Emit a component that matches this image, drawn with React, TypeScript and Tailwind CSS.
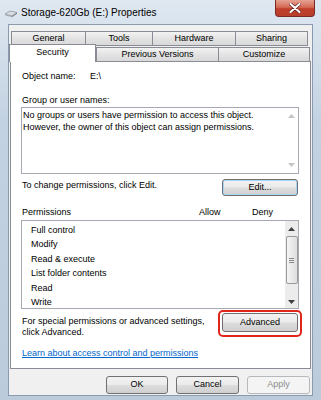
import { type ReactNode } from 'react';

const btn =
  'flex items-center justify-center rounded-[3px] border border-[#707070] bg-[linear-gradient(#f2f2f2_0%,#ebebeb_48%,#dddddd_52%,#cfcfcf_100%)] text-[9px] text-black';

function Tab({ label, width, selected }: { label: string; width: number; selected?: boolean }) {
  return (
    <div
      style={{ width }}
      className={
        selected
          ? 'flex h-[18px] items-start justify-center border-x border-t border-[#898c95] bg-white pt-[2px] text-[9px] leading-[11px] text-black'
          : '-ml-px flex h-[15px] items-center justify-center border border-[#898c95] bg-[linear-gradient(#f3f3f3,#e3e3e3_50%,#d9d9d9)] text-[9px] leading-[11px] text-black'
      }
    >
      {label}
    </div>
  );
}

function Arrow({ up, color = '#9a9a9a' }: { up?: boolean; color?: string }) {
  return (
    <svg width="7" height="4" viewBox="0 0 7 4">
      <path d={up ? 'M0 4 L3.5 0 L7 4 Z' : 'M0 0 L3.5 4 L7 0 Z'} fill={color} />
    </svg>
  );
}

function Row({ children }: { children: ReactNode }) {
  return <div className="h-[14.4px] leading-[14.4px]">{children}</div>;
}

export default function App() {
  const permissions = ['Full control', 'Modify', 'Read & execute', 'List folder contents', 'Read', 'Write'];

  return (
    <div className="relative h-[400px] w-[321px] overflow-hidden bg-[linear-gradient(#dfe8f1,#c3d2e2_30%,#bccbdc)] font-['Liberation_Sans',Arial,sans-serif]">
      {/* title bar */}
      <div className="flex h-[24px] items-start">
        <svg className="ml-[4px] mt-[10px]" width="14" height="8" viewBox="0 0 14 8">
          <path d="M1 4 L6 1 L13 2.5 L8 6 Z" fill="#d9dde2" stroke="#8e96a0" strokeWidth="0.8" />
          <path d="M1 4 L1 5.3 L8 7.3 L8 6 Z" fill="#a3aab3" />
          <path d="M8 6 L8 7.3 L13 3.8 L13 2.5 Z" fill="#7f8791" />
        </svg>
        <div className="ml-[3px] mt-[7px] text-[10px] leading-[12px] text-black">Storage-620Gb (E:) Properties</div>
        <div className="ml-auto mr-[6px] flex h-[17px] w-[40px] items-center justify-center rounded-b-[4px] border border-t-0 border-[#7a2a22] bg-[linear-gradient(#e6a293,#d56a55_45%,#c13f2b_55%,#b8402c)]">
          <svg width="12" height="10" viewBox="0 0 12 10">
            <path d="M1.5 1 L10.5 9 M10.5 1 L1.5 9" stroke="#5a1a14" strokeWidth="3.4" strokeLinecap="round" />
            <path d="M1.5 1 L10.5 9 M10.5 1 L1.5 9" stroke="#ffffff" strokeWidth="2.2" strokeLinecap="round" />
          </svg>
        </div>
      </div>

      {/* body */}
      <div className="ml-[8px] h-[372px] w-[305px] border border-[#8a9bb0] bg-[#f0f0f0]">
        {/* tabs */}
        <div className="ml-[3px] mt-[6px] flex">
          <Tab label="General" width={75} />
          <Tab label="Tools" width={68} />
          <Tab label="Hardware" width={84} />
          <Tab label="Sharing" width={73} />
        </div>
        <div className="relative z-10 -mb-px -mt-[2px] flex items-end pl-[0px]">
          <Tab label="Security" width={87} selected />
          <div className="ml-px flex">
            <Tab label="Previous Versions" width={123} />
            <Tab label="Customize" width={92} />
          </div>
        </div>

        {/* panel */}
        <div className="ml-px h-[308px] w-[301px] border border-[#898c95] bg-white text-[9px] leading-[11px] text-black">
          <div className="ml-[10px] w-[278px]">
            <div className="mt-[9px] flex pl-px">
              <span className="w-[68px]">Object name:</span>
              <span>E:\</span>
            </div>
            <div className="mt-[13px] pl-px">Group or user names:</div>

            <div className="mt-px flex h-[67px] border border-[#a6abb3]">
              <div className="flex-1 pl-px pt-[2px] leading-[11.5px]">
                <div>No groups or users have permission to access this object.</div>
                <div>However, the owner of this object can assign permissions.</div>
              </div>
              <div className="flex w-[13px] flex-col items-center justify-between pb-[6px] pt-[6px]">
                <Arrow up color="#c4c4c4" />
                <Arrow color="#c4c4c4" />
              </div>
            </div>

            <div className="mt-[5px] flex items-start">
              <span className="mt-[1px] flex-1 pl-px">To change permissions, click Edit.</span>
              <div className={`${btn} mr-px h-[17px] w-[76px] border-[#3c7fb1] shadow-[inset_0_0_0_1px_#a6d8f5]`}>Edit...</div>
            </div>

            <div className="mt-[11px] flex">
              <span className="w-[178px] pl-px">Permissions</span>
              <span className="w-[53px]">Allow</span>
              <span>Deny</span>
            </div>

            <div className="mt-[2px] flex h-[89px] border border-[#a6abb3]">
              <div className="flex-1 pl-[9px] pt-[2px]">
                {permissions.map((p) => (
                  <Row key={p}>{p}</Row>
                ))}
              </div>
              <div className="flex w-[13px] flex-col items-center bg-[#ececec]">
                <div className="flex h-[15px] items-center">
                  <Arrow up color="#404040" />
                </div>
                <div className="flex h-[48px] w-[12px] flex-col items-center justify-center gap-[1px] rounded-[2px] border border-[#9a9a9a] bg-[linear-gradient(90deg,#f4f4f4,#dedede)]">
                  <div className="h-px w-[5px] bg-[#8a8a8a]" />
                  <div className="h-px w-[5px] bg-[#8a8a8a]" />
                  <div className="h-px w-[5px] bg-[#8a8a8a]" />
                </div>
                <div className="flex flex-1 items-end pb-[4px]">
                  <Arrow color="#404040" />
                </div>
              </div>
            </div>

            <div className="mt-[4px] flex items-start">
              <span className="mt-[3px] flex-1 pl-px">
                For special permissions or advanced settings,
                <br />
                click Advanced.
              </span>
              <div className={`${btn} relative mr-px h-[19px] w-[76px]`}>
                Advanced
                <span className="absolute -bottom-[6px] -left-[5px] -right-[5px] -top-[4px] rounded-[5px] border-2 border-[#e0261a]" />
              </div>
            </div>

            <div className="mt-[10px] pl-px text-[#0066cc] underline">Learn about access control and permissions</div>
          </div>
        </div>

        {/* buttons */}
        <div className="mt-[7px] flex justify-end gap-[8px] pr-[2px]">
          <div className={`${btn} h-[18px] w-[62px]`}>OK</div>
          <div className={`${btn} h-[18px] w-[63px]`}>Cancel</div>
          <div className="flex h-[18px] w-[63px] items-center justify-center rounded-[3px] border border-[#b5b9bd] bg-[#f4f4f4] text-[9px] text-[#8d8d8d]">
            Apply
          </div>
        </div>
      </div>
    </div>
  );
}
